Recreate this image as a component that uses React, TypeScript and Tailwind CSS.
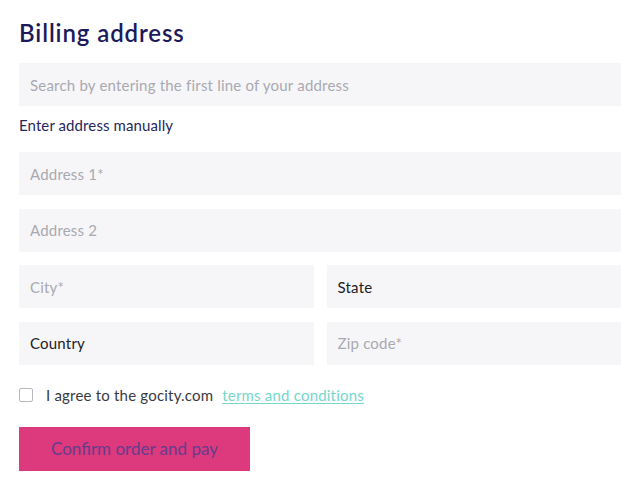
import { useState } from "react";

const inputBase =
  "h-[43px] w-full bg-[#f6f6f8] px-[11px] text-[15px] tracking-[0.2px] text-[#222226] placeholder:text-[#a9a9b1] outline-none";

function Field({ placeholder, value }: { placeholder: string; value?: string }) {
  return <input className={inputBase} placeholder={placeholder} defaultValue={value} />;
}

export default function App() {
  const [agreed, setAgreed] = useState(false);

  return (
    <div className="min-h-[486px] w-[640px] bg-white font-['Lato',sans-serif]">
      <form className="flex flex-col pl-[19px] pr-[19px] pt-[17px]" onSubmit={(e) => e.preventDefault()}>
        <h1 className="text-[24px] font-semibold leading-[32px] tracking-[0.9px] text-[#1c1a5c]">Billing address</h1>

        <input
          className={`${inputBase} mt-[14px]`}
          placeholder="Search by entering the first line of your address"
        />
        <button type="button" className="mt-[9px] self-start text-[15px] leading-[20px] tracking-[0.1px] text-[#27285f]">
          Enter address manually
        </button>

        <div className="mt-[17px] flex flex-col gap-[13.67px]">
          <Field placeholder="Address 1*" />
          <Field placeholder="Address 2" />
          <div className="grid grid-cols-2 gap-[13px]">
            <Field placeholder="City*" />
            <Field placeholder="State" value="State" />
          </div>
          <div className="grid grid-cols-2 gap-[13px]">
            <Field placeholder="Country" value="Country" />
            <Field placeholder="Zip code*" />
          </div>
        </div>

        <label className="mt-[23px] flex items-center text-[15px] leading-[14px] tracking-[0.2px] text-[#3a3a44]">
          <input
            type="checkbox"
            checked={agreed}
            onChange={(e) => setAgreed(e.target.checked)}
            className="h-[14px] w-[14px] appearance-none rounded-[2px] border border-[#b9b9bf] bg-white"
          />
          <span className="ml-[13px]">I agree to the gocity.com</span>
          <a href="#" className="ml-[9px] text-[#76d6cc] underline underline-offset-2">
            terms and conditions
          </a>
        </label>

        <button
          type="submit"
          className="mt-[25px] h-[44px] w-[231px] bg-[#dc3a7c] text-[17px] text-[#663c8d]"
        >
          Confirm order and pay
        </button>
      </form>
    </div>
  );
}
